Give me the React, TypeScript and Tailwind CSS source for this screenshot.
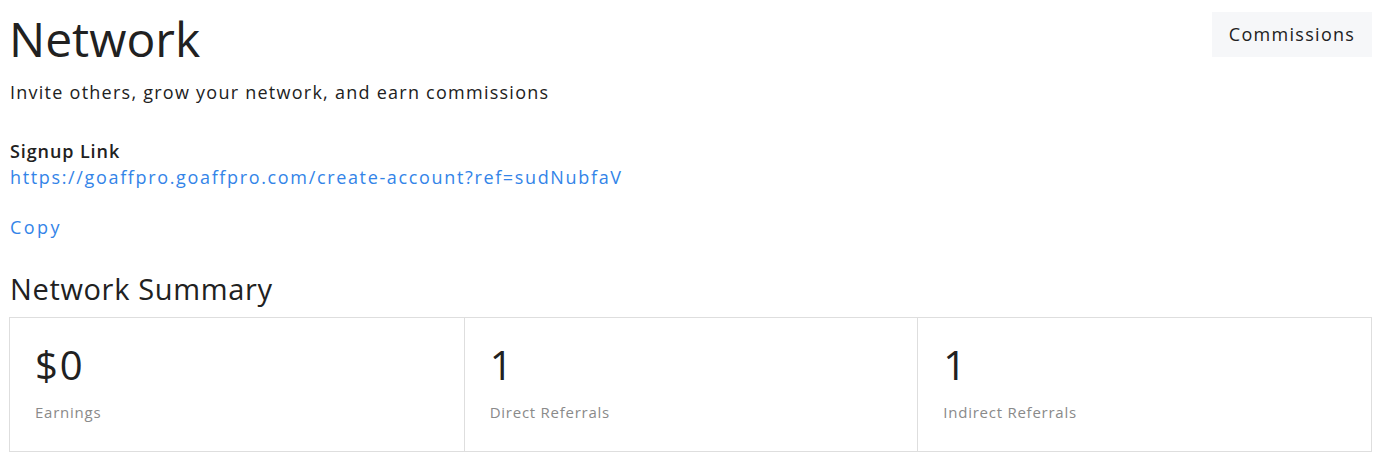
export default function App() {
  const stats = [
    { v: "$0", l: "Earnings" },
    { v: "1", l: "Direct Referrals" },
    { v: "1", l: "Indirect Referrals" },
  ];
  return (
    <div className="min-h-[462px] bg-white px-[9px] text-[#212121]" style={{ fontFamily: '"Open Sans", sans-serif' }}>
      <div className="flex items-start justify-between">
        <div>
          <h1 className="mt-[10px] text-[48px] font-normal leading-[58px]">Network</h1>
          <p className="mt-[10px] pl-px text-[18px] leading-[28px] tracking-[1.25px]">Invite others, grow your network, and earn commissions</p>
        </div>
        <button className="mt-[12px] h-[45px] w-[160px] bg-[#f6f7f9] text-[18px] tracking-[1.3px] text-[#212121]">Commissions</button>
      </div>
      <div className="mt-[33px] pl-px">
        <div className="text-[18px] font-semibold leading-[24px] tracking-[0.9px]">Signup Link</div>
        <a className="block text-[18px] leading-[28px] tracking-[1.65px] text-[#3384e8]">https://goaffpro.goaffpro.com/create-account?ref=sudNubfaV</a>
        <button className="mt-[22px] text-[18px] leading-[28px] tracking-[2.4px] text-[#3384e8]">Copy</button>
      </div>
      <h2 className="mt-[29px] pl-px text-[29px] font-normal leading-[38px] tracking-[0.65px]">Network Summary</h2>
      <div className="mt-[9px] grid grid-cols-3 border border-[#dedede]">
        {stats.map((s, i) => (
          <div key={i} className={`h-[133px] px-[25px] pt-[23px] ${i > 0 ? "border-l border-[#dedede]" : ""}`}>
            <div className="text-[40px] leading-[48px] tracking-[2px]">{s.v}</div>
            <div className="mt-[12px] text-[15px] leading-[22px] tracking-[0.75px] text-[#8a8a8a]">{s.l}</div>
          </div>
        ))}
      </div>
    </div>
  );
}
